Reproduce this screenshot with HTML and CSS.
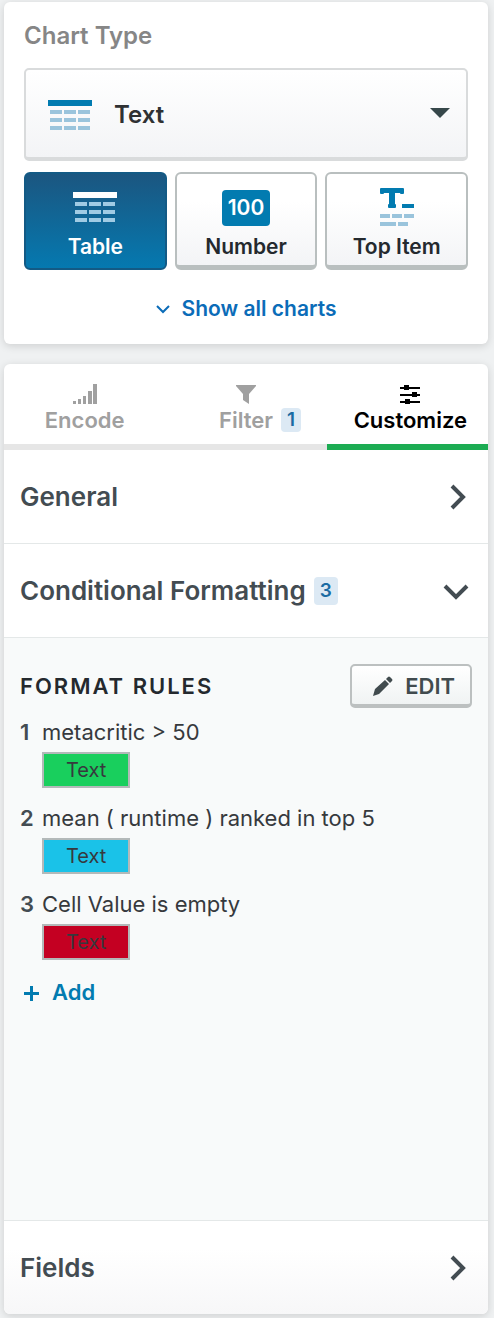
FILE: index.html
```html
<!DOCTYPE html>
<html lang="en">
<head>
    <meta charset="UTF-8">
    <meta name="viewport" content="width=device-width, initial-scale=1.0">
    <title>Chart Settings</title>
    <link rel="stylesheet" href="styles.css">
</head>
<body>
    <section class="card chart-card">
        <label class="chart-label" for="chart-type">Chart Type</label>
        <div class="chart-select">
            <select id="chart-type">
                <option>Text</option>
            </select>
            <svg class="select-icon" width="44" height="30" viewBox="0 0 44 30" aria-hidden="true">
                <path fill="#027bb0" d="M0 0h44v6H0z"/>
                <path fill="#9ac4dc" d="M2 10h12v4H2zM16 10h12v4H16zM30 10h12v4H30zM2 18h12v4H2zM16 18h12v4H16zM30 18h12v4H30zM2 26h12v4H2zM16 26h12v4H16zM30 26h12v4H30z"/>
            </svg>
            <svg class="select-arrow" width="20" height="10" viewBox="0 0 20 10" aria-hidden="true">
                <path fill="#36474a" d="M0 0h20L10 10z"/>
            </svg>
        </div>

        <div class="tiles">
            <button type="button" class="tile active" aria-pressed="true">
                <svg width="44" height="40" viewBox="0 0 44 40" aria-hidden="true">
                    <path fill="#fff" d="M0 6h44v6H0z"/>
                    <path fill="#a0cbe4" d="M2 16h12v4H2zM16 16h12v4H16zM30 16h12v4H30zM2 24h12v4H2zM16 24h12v4H16zM30 24h12v4H30zM2 32h12v4H2zM16 32h12v4H16zM30 32h12v4H30z"/>
                </svg>
                <span>Table</span>
            </button>
            <button type="button" class="tile" aria-pressed="false">
                <span class="number-icon" aria-hidden="true">100</span>
                <span>Number</span>
            </button>
            <button type="button" class="tile" aria-pressed="false">
                <svg width="34" height="40" viewBox="0 0 34 40" aria-hidden="true">
                    <path fill="#027bb0" d="M1 2h22q1 0 1 1v4q0 1-1 1h-2q-1 0-1-1h-5v11q1 0 1 1v2q0 1-1 1H9q-1 0-1-1v-2q0-1 1-1V7H4q0 1-1 1H1Q0 8 0 7V3q0-1 1-1zM22 18h12v4H22z"/>
                    <path fill="#9ac4dc" d="M0 28h10v4H0zM12 28h10v4H12zM24 28h10v4H24zM0 36h16v4H0zM18 36h10v4H18z"/>
                </svg>
                <span>Top Item</span>
            </button>
        </div>

        <a class="show-all" href="#charts">
            <svg width="14" height="10" viewBox="0 0 14 10" aria-hidden="true">
                <path fill="none" stroke="#0b6cb8" stroke-width="2" d="M1 2l6 6 6-6"/>
            </svg>
            Show all charts
        </a>
    </section>

    <section class="card settings-card">
        <div class="tabs" role="tablist">
            <button type="button" class="tab" role="tab" aria-selected="false">
                <svg width="26" height="22" viewBox="0 0 26 22" aria-hidden="true">
                    <path fill="currentColor" d="M1 18h3v3H1zM6 16h3v5H6zM11 13h3v8h-3zM16 8h4v13h-4zM21 1h4v20h-4z"/>
                </svg>
                <span class="tab-text">Encode</span>
            </button>
            <button type="button" class="tab" role="tab" aria-selected="false">
                <svg width="20" height="22" viewBox="0 0 20 22" aria-hidden="true">
                    <path fill="currentColor" d="M0 2h20v1l-7 8v10l-6-4v-6L0 3z"/>
                </svg>
                <span class="tab-text">Filter <span class="badge tab-badge">1</span></span>
            </button>
            <button type="button" class="tab active" role="tab" aria-selected="true">
                <svg width="22" height="22" viewBox="0 0 22 22" aria-hidden="true">
                    <path fill="currentColor" d="M1 4h20v2H1zM1 11h20v2H1zM1 18h20v2H1z"/>
                    <path fill="currentColor" d="M5 2h5v5H5zM13 9h5v5h-5zM6 16h5v5H6z"/>
                </svg>
                <span class="tab-text">Customize</span>
            </button>
        </div>

        <button type="button" class="section-head" aria-expanded="false">
            General
            <svg class="chevron" width="26" height="26" viewBox="0 0 26 26" aria-hidden="true">
                <path fill="none" stroke="currentColor" stroke-width="4" d="M9 2l11 11L9 24"/>
            </svg>
        </button>

        <button type="button" class="section-head" aria-expanded="true" aria-controls="rules">
            Conditional Formatting
            <span class="badge">3</span>
            <svg class="chevron" width="26" height="26" viewBox="0 0 26 26" aria-hidden="true">
                <path fill="none" stroke="currentColor" stroke-width="4" d="M2 8l11 11L24 8"/>
            </svg>
        </button>

        <div class="rules" id="rules">
            <div class="rules-head">
                <h2>FORMAT RULES</h2>
                <button type="button" class="edit-btn">
                    <svg width="20" height="20" viewBox="0 0 20 20" aria-hidden="true">
                        <path fill="currentColor" d="M0 20l2-7L12 4l4 4L6 18zM13 3l2-2q1-1 2 0l2 2q1 1 0 2l-2 2z"/>
                    </svg>
                    EDIT
                </button>
            </div>

            <ol class="rule-list">
                <li>
                    <b>1</b>
                    <span>metacritic &gt; 50</span>
                    <div class="swatch green">Text</div>
                </li>
                <li>
                    <b>2</b>
                    <span>mean ( runtime ) ranked in top 5</span>
                    <div class="swatch blue">Text</div>
                </li>
                <li>
                    <b>3</b>
                    <span>Cell Value is empty</span>
                    <div class="swatch red">Text</div>
                </li>
            </ol>

            <button type="button" class="add-btn">
                <svg width="17" height="17" viewBox="0 0 17 17" aria-hidden="true">
                    <path fill="currentColor" d="M7 2h3v6h6v3h-6v6H7v-6H1V8h6z"/>
                </svg>
                Add
            </button>
        </div>

        <button type="button" class="section-head last" aria-expanded="false">
            Fields
            <svg class="chevron" width="26" height="26" viewBox="0 0 26 26" aria-hidden="true">
                <path fill="none" stroke="currentColor" stroke-width="4" d="M9 2l11 11L9 24"/>
            </svg>
        </button>
    </section>
</body>
</html>
```
FILE: styles.css
```css
* {
    box-sizing: border-box;
}
body {
    display: flex;
    flex-direction: column;
    gap: 20px;
    min-height: 100vh;
    margin: 0;
    padding: 2px 6px 4px 4px;
    background: #eff1f2;
    color: #36393d;
    font-family: Inter, "Liberation Sans", sans-serif;
    font-size: 22px;
    line-height: 28px;
}
button,
select {
    margin: 0;
    border: none;
    background: none;
    color: inherit;
    font: inherit;
    cursor: pointer;
}
svg {
    display: block;
    flex: none;
}
.card {
    border-radius: 6px;
    background: white;
    box-shadow: 0 2px 8px rgba(0, 0, 0, 0.14);
}

/* Chart type */
.chart-card {
    padding: 20px;
}
.chart-label {
    display: block;
    margin-bottom: 18px;
    color: #868686;
    font-size: 24px;
    font-weight: 600;
}
.chart-select {
    display: grid;
    align-items: center;
    margin-bottom: 11px;
}
.chart-select > * {
    grid-area: 1 / 1;
}
.chart-select select {
    appearance: none;
    width: 100%;
    padding: 32px 60px 29px 88px;
    border: 2px solid #d9dbdc;
    border-bottom-width: 4px;
    border-radius: 5px;
    background: linear-gradient(#ffffff, #f3f4f6);
    color: #2f3133;
    font-size: 24px;
    font-weight: 600;
    line-height: 26px;
}
.select-icon,
.select-arrow {
    pointer-events: none;
}
.select-icon {
    margin-left: 24px;
}
.select-arrow {
    justify-self: end;
    margin: 0 18px 4px 0;
}
.tiles {
    display: grid;
    grid-template-columns: repeat(3, 1fr);
    gap: 8px;
}
.tile {
    display: flex;
    flex-direction: column;
    align-items: center;
    justify-content: space-between;
    min-height: 98px;
    padding: 12px 4px 4px;
    border: 2px solid #b9bfbf;
    border-bottom-width: 5px;
    border-radius: 6px;
    background: linear-gradient(#ffffff 30%, #f3f4f6);
    color: #24292e;
    font-size: 21px;
    font-weight: 600;
    line-height: 28px;
}
.tile.active {
    padding-bottom: 7px;
    border: 2px solid #135a85;
    background: linear-gradient(#1b5680, #0579b0);
    color: white;
}
.number-icon {
    margin-top: 4px;
    padding: 4px 6px;
    border-radius: 4px;
    background: #027bb0;
    color: white;
}
.show-all {
    display: flex;
    align-items: center;
    justify-content: center;
    gap: 12px;
    margin: 25px 0 1px;
    color: #0b6cb8;
    font-size: 21px;
    font-weight: 600;
    text-decoration: none;
}

/* Settings tabs */
.settings-card {
    display: flex;
    flex: 1;
    flex-direction: column;
}
.tabs {
    display: grid;
    grid-template-columns: repeat(3, 1fr);
}
.tab {
    display: flex;
    flex-direction: column;
    align-items: center;
    gap: 1px;
    padding: 19px 0 10px;
    border-bottom: 6px solid #e6e6e6;
    color: #a0a0a0;
    font-weight: 600;
}
.tab.active {
    padding-left: 6px;
    border-color: #1cac53;
    color: #000000;
}
.tab-text {
    position: relative;
}
.badge {
    padding: 0 6px;
    border-radius: 4px;
    background: #dce9f4;
    color: #1a6ba3;
    font-size: 19px;
    font-weight: 600;
    line-height: 28px;
}
.tab-badge {
    position: absolute;
    top: 2px;
    left: 100%;
    margin-left: 8px;
    line-height: 24px;
}

/* Collapsible sections */
.section-head {
    display: flex;
    align-items: center;
    gap: 8px;
    padding: 31px 19px 30px 16px;
    border-bottom: 1px solid #e4e8e8;
    color: #434c52;
    font-size: 26px;
    font-weight: 600;
    line-height: 32px;
    text-align: left;
}
.section-head.last {
    border-bottom: none;
    border-radius: 0 0 6px 6px;
    background: linear-gradient(#ffffff 30%, #f7f7f8);
}
.chevron {
    margin-left: auto;
}
.rules {
    flex: 1;
    padding: 26px 16px;
    border-bottom: 1px solid #e4e8e8;
    background: #f8fafa;
}
.rules-head {
    display: flex;
    align-items: center;
    justify-content: space-between;
    margin-bottom: 10px;
}
.rules-head h2 {
    margin: 0;
    color: #24292e;
    font-size: 22px;
    font-weight: 600;
    letter-spacing: 2px;
}
.edit-btn {
    display: flex;
    align-items: center;
    gap: 12px;
    padding: 7px 15px 5px 21px;
    border: 2px solid #bcc0c0;
    border-bottom-width: 4px;
    border-radius: 5px;
    background: linear-gradient(#ffffff, #f0f3f3);
    color: #414b4e;
    font-weight: 600;
    line-height: 26px;
}
.rule-list {
    display: grid;
    gap: 16px;
    margin: 0;
    padding: 0;
    list-style: none;
}
.rule-list li {
    display: grid;
    grid-template-columns: 14px 1fr;
    gap: 6px 8px;
}
.rule-list b {
    color: #434c52;
    font-weight: 600;
}
.swatch {
    grid-column: 2;
    justify-self: start;
    padding: 4px 22px;
    border: 2px solid #b3b9b9;
    font-size: 20px;
    line-height: 24px;
}
.green {
    background: #19cf5d;
}
.blue {
    background: #1ac2e8;
}
.red {
    background: #c40022;
}
.add-btn {
    display: flex;
    align-items: center;
    gap: 12px;
    margin-top: 18px;
    padding: 0 3px;
    color: #027bb0;
    font-weight: 600;
}
```
